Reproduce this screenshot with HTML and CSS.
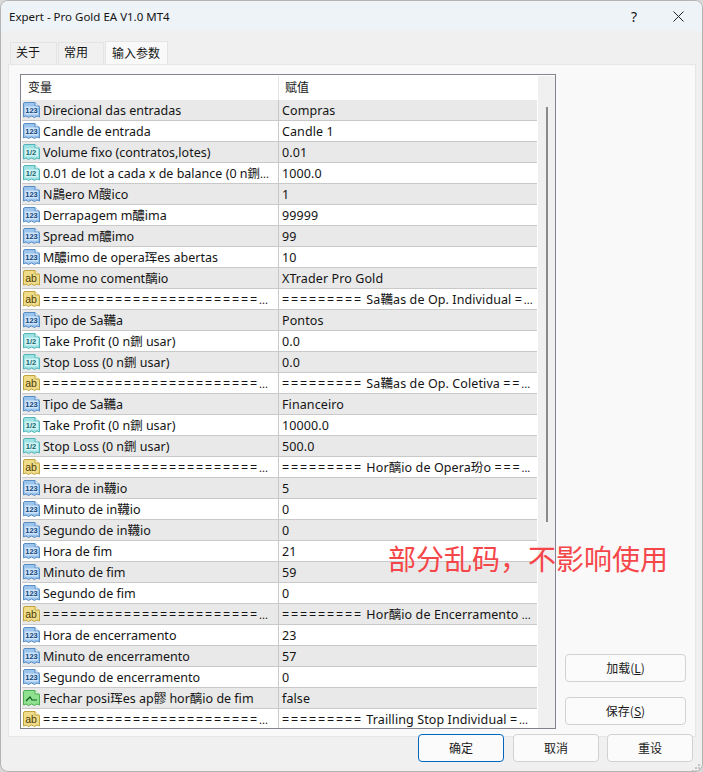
FILE: index.html
```html
<!DOCTYPE html>
<html lang="zh">
<head>
<meta charset="utf-8">
<title>Expert - Pro Gold EA V1.0 MT4</title>
<link rel="stylesheet" href="styles.css">
</head>
<body>
<svg class="defs" width="0" height="0" aria-hidden="true">
  <symbol id="i-int" viewBox="0 0 17 17"><path d="M.5 2Q.5.5 2 .5H12L16.5 5V15L14 14 11.5 15.5 8.5 14 5.500 15.500 3 14 .5 15Z" fill="#9cc5ee" stroke="#5a8cc4"/><path d="M12 .5V4H16.500" fill="#dcebfa" stroke="#5a8cc4"/><rect x="2" y="4.500" width="13" height="8" fill="#cfe3f8"/><text x="8.500" y="11.300" class="ico-t" fill="#14467c">123</text></symbol>
  <symbol id="i-dbl" viewBox="0 0 17 17"><path d="M.5 2Q.5.5 2 .5H12L16.500 5V15L14 14 11.500 15.500 8.500 14 5.500 15.500 3 14 .5 15Z" fill="#9de2e2" stroke="#52b4b9"/><path d="M12 .5V4H16.500" fill="#dcf6f6" stroke="#52b4b9"/><rect x="2" y="4.500" width="13" height="8" fill="#d2f3f3"/><text x="8" y="11.300" class="ico-t" fill="#15686e">1/2</text></symbol>
  <symbol id="i-str" viewBox="0 0 17 17"><path d="M.5 2Q.5.5 2 .5H12L16.500 5V15L14 14 11.500 15.500 8.500 14 5.500 15.500 3 14 .5 15Z" fill="#f0dc88" stroke="#c0a440"/><path d="M12 .5V4H16.500" fill="#fbf4cf" stroke="#c0a440"/><text x="8" y="11.800" class="ico-s" fill="#4b3d08">ab</text></symbol>
  <symbol id="i-bool" viewBox="0 0 17 17"><path d="M.5 2Q.5.5 2 .5H12L16.500 5V15L14 14 11.500 15.500 8.500 14 5.500 15.500 3 14 .5 15Z" fill="#8fe08f" stroke="#4eae55"/><path d="M12 .5V4H16.500" fill="#e0f8e0" stroke="#4eae55"/><path d="M3 11 7 7 9 10H14" fill="none" stroke="#0f5a1c" stroke-width="1.200"/></symbol>
</svg>
<div class="window">
  <header class="titlebar">
    <span class="title">Expert - Pro Gold EA V1.0 MT4</span>
    <span class="help">?</span>
    <svg class="close" width="11" height="11" viewBox="0 0 11 11"><path d="M.5.5 10.500 10.500M10.500.5.5 10.500" stroke="#222" fill="none"/></svg>
  </header>
  <nav class="tabs">
    <span class="tab">关于</span>
    <span class="tab second">常用</span>
    <span class="tab active">输入参数</span>
  </nav>
  <main class="panel">
    <div class="table">
      <div class="thead"><span class="th th-name">变量</span><span class="th th-val">赋值</span></div>
      <div class="tbody">
        <div class="rows">
          <div class="row"><span class="name"><svg class="ico"><use href="#i-int"/></svg><span class="txt">Direcional das entradas</span></span><span class="val">Compras</span></div>
          <div class="row"><span class="name"><svg class="ico"><use href="#i-int"/></svg><span class="txt">Candle de entrada</span></span><span class="val">Candle 1</span></div>
          <div class="row"><span class="name"><svg class="ico"><use href="#i-dbl"/></svg><span class="txt">Volume fixo (contratos,lotes)</span></span><span class="val">0.01</span></div>
          <div class="row"><span class="name"><svg class="ico"><use href="#i-dbl"/></svg><span class="txt">0.01 de lot a cada x de balance (0 n鉶<span class="dots">...</span></span></span><span class="val">1000.0</span></div>
          <div class="row"><span class="name"><svg class="ico"><use href="#i-int"/></svg><span class="txt">N鷐ero M醙ico</span></span><span class="val">1</span></div>
          <div class="row"><span class="name"><svg class="ico"><use href="#i-int"/></svg><span class="txt">Derrapagem m醲ima</span></span><span class="val">99999</span></div>
          <div class="row"><span class="name"><svg class="ico"><use href="#i-int"/></svg><span class="txt">Spread m醲imo</span></span><span class="val">99</span></div>
          <div class="row"><span class="name"><svg class="ico"><use href="#i-int"/></svg><span class="txt">M醲imo de opera珲es abertas</span></span><span class="val">10</span></div>
          <div class="row"><span class="name"><svg class="ico"><use href="#i-str"/></svg><span class="txt">Nome no coment醨io</span></span><span class="val">XTrader Pro Gold</span></div>
          <div class="row"><span class="name"><svg class="ico"><use href="#i-str"/></svg><span class="txt"><span class="eq">========================</span><span class="dots">...</span></span></span><span class="val"><span class="eq">=========</span> Sa韉as de Op. Individual <span class="eq">=</span><span class="dots">...</span></span></div>
          <div class="row"><span class="name"><svg class="ico"><use href="#i-int"/></svg><span class="txt">Tipo de Sa韉a</span></span><span class="val">Pontos</span></div>
          <div class="row"><span class="name"><svg class="ico"><use href="#i-dbl"/></svg><span class="txt">Take Profit (0 n鉶 usar)</span></span><span class="val">0.0</span></div>
          <div class="row"><span class="name"><svg class="ico"><use href="#i-dbl"/></svg><span class="txt">Stop Loss (0 n鉶 usar)</span></span><span class="val">0.0</span></div>
          <div class="row"><span class="name"><svg class="ico"><use href="#i-str"/></svg><span class="txt"><span class="eq">========================</span><span class="dots">...</span></span></span><span class="val"><span class="eq">=========</span> Sa韉as de Op. Coletiva <span class="eq">==</span><span class="dots">...</span></span></div>
          <div class="row"><span class="name"><svg class="ico"><use href="#i-int"/></svg><span class="txt">Tipo de Sa韉a</span></span><span class="val">Financeiro</span></div>
          <div class="row"><span class="name"><svg class="ico"><use href="#i-dbl"/></svg><span class="txt">Take Profit (0 n鉶 usar)</span></span><span class="val">10000.0</span></div>
          <div class="row"><span class="name"><svg class="ico"><use href="#i-dbl"/></svg><span class="txt">Stop Loss (0 n鉶 usar)</span></span><span class="val">500.0</span></div>
          <div class="row"><span class="name"><svg class="ico"><use href="#i-str"/></svg><span class="txt"><span class="eq">========================</span><span class="dots">...</span></span></span><span class="val"><span class="eq">=========</span> Hor醨io de Opera玢o <span class="eq">===</span><span class="dots">...</span></span></div>
          <div class="row"><span class="name"><svg class="ico"><use href="#i-int"/></svg><span class="txt">Hora de in韈io</span></span><span class="val">5</span></div>
          <div class="row"><span class="name"><svg class="ico"><use href="#i-int"/></svg><span class="txt">Minuto de in韈io</span></span><span class="val">0</span></div>
          <div class="row"><span class="name"><svg class="ico"><use href="#i-int"/></svg><span class="txt">Segundo de in韈io</span></span><span class="val">0</span></div>
          <div class="row"><span class="name"><svg class="ico"><use href="#i-int"/></svg><span class="txt">Hora de fim</span></span><span class="val">21</span></div>
          <div class="row"><span class="name"><svg class="ico"><use href="#i-int"/></svg><span class="txt">Minuto de fim</span></span><span class="val">59</span></div>
          <div class="row"><span class="name"><svg class="ico"><use href="#i-int"/></svg><span class="txt">Segundo de fim</span></span><span class="val">0</span></div>
          <div class="row"><span class="name"><svg class="ico"><use href="#i-str"/></svg><span class="txt"><span class="eq">========================</span><span class="dots">...</span></span></span><span class="val"><span class="eq">=========</span> Hor醨io de Encerramento <span class="dots">...</span></span></div>
          <div class="row"><span class="name"><svg class="ico"><use href="#i-int"/></svg><span class="txt">Hora de encerramento</span></span><span class="val">23</span></div>
          <div class="row"><span class="name"><svg class="ico"><use href="#i-int"/></svg><span class="txt">Minuto de encerramento</span></span><span class="val">57</span></div>
          <div class="row"><span class="name"><svg class="ico"><use href="#i-int"/></svg><span class="txt">Segundo de encerramento</span></span><span class="val">0</span></div>
          <div class="row"><span class="name"><svg class="ico"><use href="#i-bool"/></svg><span class="txt">Fechar posi珲es ap髎 hor醨io de fim</span></span><span class="val">false</span></div>
          <div class="row"><span class="name"><svg class="ico"><use href="#i-str"/></svg><span class="txt"><span class="eq">========================</span><span class="dots">...</span></span></span><span class="val"><span class="eq">=========</span> Trailling Stop Individual <span class="eq">=</span><span class="dots">...</span></span></div>
        </div>
        <div class="scrollbar"><div class="thumb"></div></div>
      </div>
    </div>
    <aside class="side">
      <button class="btn side-btn">加载(<u>L</u>)</button>
      <button class="btn side-btn">保存(<u>S</u>)</button>
    </aside>
    <div class="note">部分乱码，不影响使用</div>
  </main>
  <footer class="actions">
    <button class="btn act-btn primary">确定</button>
    <button class="btn act-btn">取消</button>
    <button class="btn act-btn last">重设</button>
    <svg class="grip" width="9" height="8" viewBox="0 0 9 8"><path d="M6 0h2v2H6zM3 3h2v2H3zM6 3h2v2H6zM0 6h2v2H0zM3 6h2v2H3zM6 6h2v2H6z" fill="#c4c4c4"/></svg>
  </footer>
</div>
</body>
</html>
```

FILE: styles.css
```css
* { box-sizing: border-box; }
html, body { margin: 0; padding: 0; }
body {
  width: 703px; height: 772px; overflow: hidden; background: #d8d8d8;
  font-family: "Noto Sans", "Noto Sans CJK SC", sans-serif;
  font-size: 12.5px; color: #141414;
}
.defs { position: absolute; }
.ico-t { font: bold 7.5px "Liberation Sans", sans-serif; text-anchor: middle; }
.ico-s { font: 10.5px "Liberation Sans", sans-serif; text-anchor: middle; }

.window {
  width: 703px; height: 772px; background: #f0f0f0;
  border: 1px solid #b4b4b4; border-radius: 8px;
  display: flex; flex-direction: column; overflow: hidden; position: relative;
}
.window::before, .window::after {
  content: ""; position: absolute; top: 0; bottom: 0; width: 1px; z-index: 2;
}
.window::before {
  left: -1px;
  background: linear-gradient(to bottom,
    transparent 0 100px, #b08a3c 100px 130px, #777 130px 150px, #4a6a90 150px 158px,
    #777 158px 240px, #a8803c 240px 247px, #6c6c6c 247px 524px, #a8803c 524px 527px,
    #b4b4b4 527px 603px, #444 603px 604px, #b4b4b4 604px 610px, #4a6a90 610px 614px,
    #b4b4b4 614px 625px, #444 625px 626px, #b4b4b4 626px 650px, #8c8c8c 650px 680px, transparent 680px);
}
.window::after {
  right: -1px;
  background: linear-gradient(to bottom,
    transparent 0 152px, #c8383c 152px 170px, transparent 170px 603px,
    #444 603px 606px, transparent 606px 615px, #444 615px 618px, transparent 618px 647px,
    #a8803c 647px 655px, #8c8c8c 655px 680px, transparent 680px);
}
.titlebar {
  height: 30px; flex: none; background: #eef3f8;
  display: flex; align-items: center; padding: 0 18px 0 8px;
}
.title { flex: 1; font-size: 11.5px; }
.help { font-size: 14px; margin-right: 36px; }
.tabs { height: 33px; flex: none; display: flex; align-items: flex-end; padding-left: 9px; gap: 1px; }
.tab {
  height: 22px; background: #f0f0f0; border: 1px solid #e4e4e4; border-bottom: 0;
  width: 47px; padding-left: 5px; line-height: 18px; font-size: 12px;
  font-family: "Noto Sans CJK SC", sans-serif;
}
.tab.second { width: 46px; }
.tab.active { height: 24px; width: 63px; padding-left: 6px; line-height: 21px; background: #f9f9f9; margin-bottom: -1px; position: relative; }
.panel {
  flex: none; height: 673px; margin: 0 6px 0 7px;
  background: #f9f9f9; border: 1px solid #e6e6e6;
  padding: 9px 9px 0 11px;
  display: flex; position: relative;
}
.table {
  width: 536px; height: 655px; flex: none; background: #fff;
  border: 1px solid #82838f; padding: 1px 0 0 1px;
  display: flex; flex-direction: column; overflow: hidden;
}
.thead { height: 24px; flex: none; display: flex; width: 514px; font-size: 12px; font-family: "Noto Sans CJK SC", sans-serif; }
.th { line-height: 22px; }
.th-name { width: 257px; padding-left: 6px; border-right: 1px solid #e4e4e4; }
.th-val { padding-left: 6px; }
.tbody { flex: 1; min-height: 0; display: flex; }
.rows { width: 515px; flex: none; overflow: hidden; }
.row { height: 21px; display: flex; border-bottom: 1px solid #c9c9c9; line-height: 21px; white-space: nowrap; }
.row:nth-child(odd) { background: #e9e9e9; }
.name { width: 257px; flex: none; display: flex; align-items: center; border-right: 1px solid #c9c9c9; overflow: hidden; }
.ico { width: 17px; height: 17px; margin: 0 3px 0 1px; flex: none; }
.txt { padding-top: 1px; }
.val { padding-left: 3px; letter-spacing: .1px; }
.eq { letter-spacing: 1.85px; }
.dots { letter-spacing: 0; font-size: 11px; }
.scrollbar { flex: 1; background: #f0f0f0; margin-top: -24px; margin-left: 1px; position: relative; padding-top: 31px; display: flex; justify-content: center; }
.thumb { width: 2px; height: 415px; background: #8a8a8a; }
.side { flex: 1; display: flex; flex-direction: column; align-items: flex-end; padding: 580px 0 0 0; gap: 15px; }
.btn {
  background: #fbfbfb; border: 1px solid #d2d2d2; border-radius: 4px;
  font-family: "Noto Sans CJK SC", sans-serif; font-size: 12px; color: #1a1a1a; padding: 0 0 2px;
}
.side-btn { width: 121px; height: 28px; }
.note {
  position: absolute; left: 379px; top: 475px;
  font: 28px/36px "Noto Sans CJK SC", sans-serif; color: #f5474a; white-space: nowrap;
}
.actions { flex: none; margin-top: -3px; display: flex; justify-content: flex-end; gap: 9px; padding-right: 9px; position: relative; }
.act-btn { width: 86px; height: 28px; }
.last { margin-left: -1px; }
.primary { border-color: #0067c0; }
.grip { position: absolute; right: 1px; bottom: -10px; }
```
